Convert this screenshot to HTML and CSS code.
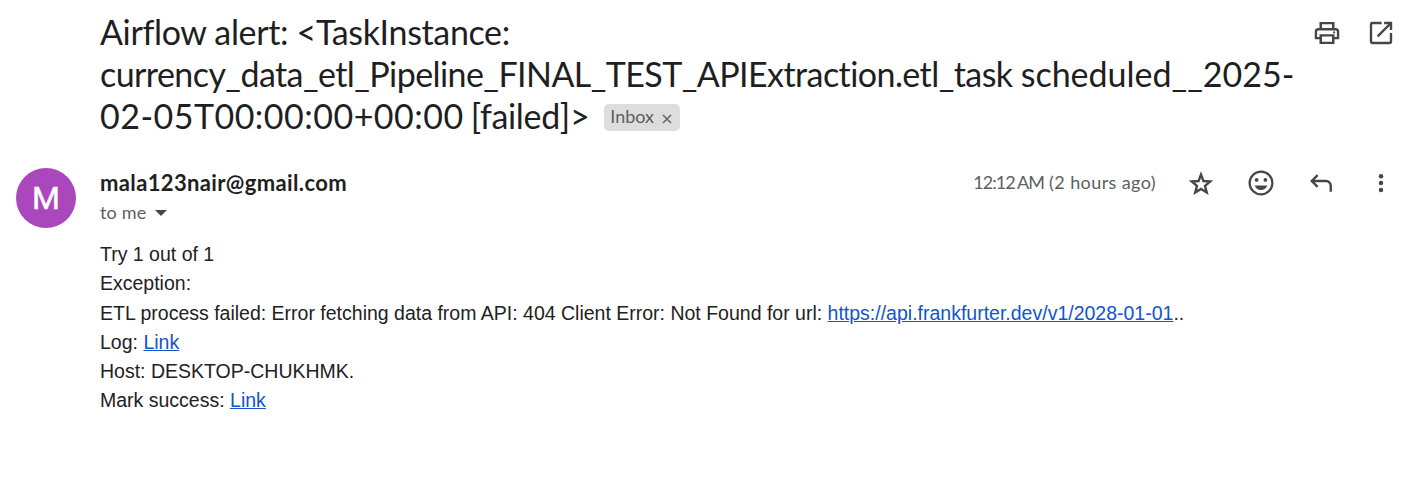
FILE: index.html
```html
<!DOCTYPE html>
<html lang="en">
<head>
<meta charset="utf-8">
<title>Airflow alert</title>
<link rel="stylesheet" href="styles.css">
</head>
<body>
<main class="mail">
  <header class="subject">
    <h1 class="title">
      <span class="line l1">Airflow alert: &lt;TaskInstance:</span>
      <span class="line l2">currency_data_etl_Pipeline_FINAL_TEST_APIExtraction.etl_task <span class="schedule">scheduled__2025-</span></span>
      <span class="last"><span class="line l3">02-05T00:00:00+00:00 <span class="state">[failed]&gt;</span></span><span class="chip"><span class="chip-text">Inbox</span><svg class="x" viewBox="0 0 10 10"><path d="M1 1l8 8M9 1L1 9"/></svg></span></span>
    </h1>
    <div class="tools">
      <svg viewBox="0 0 24 24"><path fill-rule="evenodd" d="M6 3.200h12V8h1a2.800 2.800 0 0 1 2.800 2.800V17H18v3.700H6V17H2.200v-6.200A2.800 2.800 0 0 1 5 8h1zM8 5v3h8V5zM4.100 15.200H6V13h12v2.200h1.900V11a1 1 0 0 0-1-1H5.100a1 1 0 0 0-1 1zM8 14.800V19h8v-4.200z"/><circle cx="17.700" cy="11.500" r=".9"/></svg>
      <svg class="stroke" viewBox="0 0 24 24"><path d="M12.500 4H5a1 1 0 0 0-1 1v14a1 1 0 0 0 1 1h14a1 1 0 0 0 1-1v-7M14.500 4H20v5.500M20 4L9.300 14.700"/></svg>
    </div>
  </header>
  <section class="message">
    <div class="avatar">M</div>
    <div class="content">
      <div class="head">
        <div class="who">
          <div class="from"><span class="line from-text">mala123nair@gmail.com</span></div>
          <div class="to"><span class="line to-text">to me</span><svg class="caret" viewBox="0 0 12 6"><path d="M0 0h12L6 6z"/></svg></div>
        </div>
        <div class="actions">
          <span class="line date"><span class="time">12:12 AM</span> (2 hours ago)</span>
          <svg class="stroke" viewBox="0 0 24 24"><path d="M12 5.300l1.950 5.100 5.450.4-4.200 3.500 1.400 5.300L12 16.700l-4.600 2.900 1.400-5.300-4.200-3.500 5.450-.4z"/></svg>
          <svg viewBox="0 0 24 24"><path d="M12 2a10 10 0 1 0 0 20 10 10 0 0 0 0-20zm0 18.200a8.200 8.200 0 1 1 0-16.400 8.200 8.200 0 0 1 0 16.400z"/><circle cx="8.500" cy="9.500" r="1.500"/><circle cx="15.500" cy="9.500" r="1.500"/><path d="M7 14h10a5.300 5.300 0 0 1-10 0z"/></svg>
          <svg class="stroke" viewBox="0 0 24 24"><path d="M9.300 5.700L4.600 10.400l4.700 4.700M4.600 10.400H16a3.800 3.800 0 0 1 3.800 3.800V19"/></svg>
          <svg viewBox="0 0 24 24"><circle cx="12" cy="6.500" r="1.800"/><circle cx="12" cy="12" r="1.800"/><circle cx="12" cy="17.500" r="1.800"/></svg>
        </div>
      </div>
      <div class="body">
        <p>Try 1 out of 1</p>
        <p>Exception:</p>
        <p>ETL process failed: Error fetching data from API: 404 Client Error: Not Found for url: <a>https://api.frankfurter.dev/v1/2028-01-01</a>..</p>
        <p>Log: <a>Link</a></p>
        <p>Host: DESKTOP-CHUKHMK.</p>
        <p>Mark success: <a>Link</a></p>
      </div>
    </div>
  </section>
</main>
</body>
</html>
```
FILE: styles.css
```css
body { margin: 0; background: #fff; color: #1f1f1f; font-family: "Open Sans", sans-serif; }
.mail { height: 483px; overflow: hidden; }
.subject { display: flex; justify-content: space-between; padding: 11px 27px 0 100px; height: 156px; box-sizing: border-box; }
.title { margin: 0; flex: 1; min-width: 0; font: 400 34px/42px Lato, sans-serif; white-space: nowrap; font-variant-ligatures: none; }
.line { display: block; width: max-content; white-space: nowrap; }
.l1 { letter-spacing: -0.35px; }
.l2 { letter-spacing: -0.57px; }
.schedule { letter-spacing: 0; }
.l3 { letter-spacing: 0.480px; }
.state { letter-spacing: -0.35px; margin-left: -2px; }
.last { display: flex; align-items: center; gap: 15px; }
.chip { display: flex; align-items: center; gap: 8px; height: 27px; width: 76px; box-sizing: border-box; padding: 0 7px 0 6px; background: #ddd; border-radius: 5px; font: 18px/25px Lato, sans-serif; color: #5e5e5e; margin-top: 2px; }
.chip-text { margin-top: -1px; }
.x { width: 10px; height: 10px; stroke: #666; stroke-width: 1.6; margin-top: 3px; }
.tools { display: flex; gap: 24px; padding-top: 7px; }
.tools svg, .actions svg { width: 30px; height: 30px; fill: #444746; flex: none; }
.tools .stroke, .actions .stroke { fill: none; stroke: #444746; stroke-width: 1.9; }
.message { display: flex; gap: 24px; padding: 0 27px 0 16px; }
.avatar { width: 60px; height: 60px; border-radius: 50%; background: #ab47bc; color: #fff; font: 400 32px/61px Roboto, sans-serif; -webkit-text-stroke: 0.5px #fff; text-align: center; flex: none; margin-top: 12px; }
.content { flex: 1; }
.head { display: flex; justify-content: space-between; height: 84px; }
.from { font: 700 22px/30px Lato, sans-serif; letter-spacing: 0.36px; padding-top: 12px; }
.to { display: flex; align-items: center; gap: 9px; font: 18px/30px Lato, sans-serif; color: #5e5e5e; margin-top: -1px; }
.to-text { letter-spacing: 0.15px; }
.caret { width: 12px; height: 6px; fill: #444746; margin-top: 2px; }
.actions { display: flex; gap: 30px; height: 30px; padding-top: 12px; }
.date { font: 18px/29px Lato, sans-serif; letter-spacing: 0.4px; color: #5e5e5e; }
.time { letter-spacing: -0.9px; word-spacing: -1px; }
.body { font: 19.500px/29.250px "Liberation Sans", Arial, sans-serif; color: #222; white-space: nowrap; }
.body p { margin: 0; }
.body a { color: #1155cc; text-decoration: underline; }
```
